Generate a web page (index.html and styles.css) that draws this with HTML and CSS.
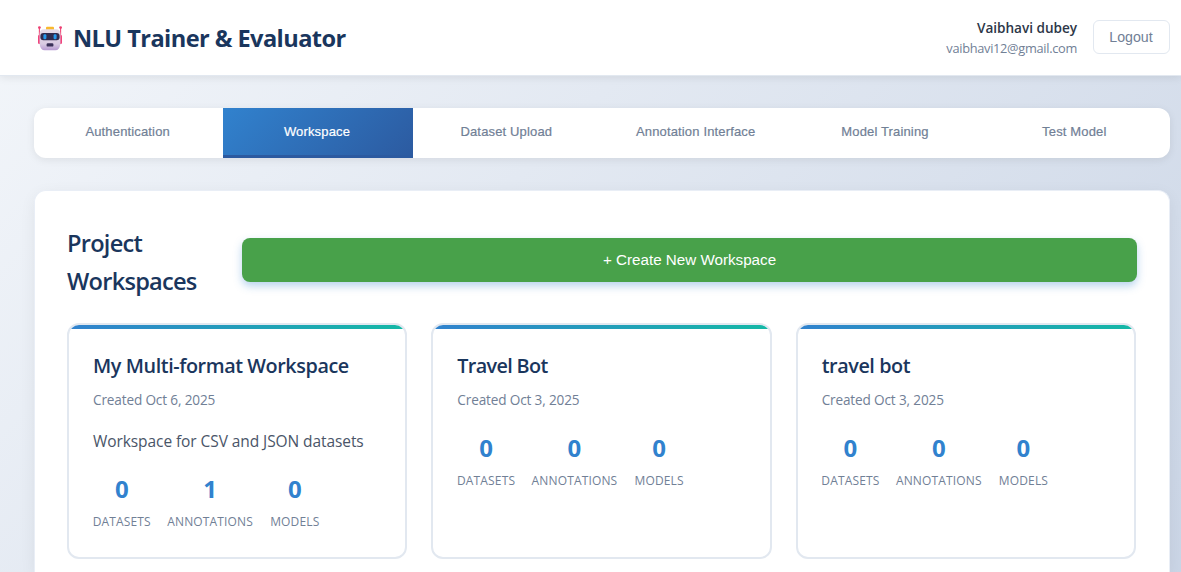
FILE: index.html
```html
<!DOCTYPE html>
<html lang="en">
<head>
<meta charset="utf-8">
<title>NLU Trainer &amp; Evaluator</title>
<link rel="stylesheet" href="styles.css">
</head>
<body>
<header class="topbar">
  <div class="brand">
    <svg class="robot" viewBox="0 0 26 26" aria-hidden="true">
      <defs>
        <linearGradient id="face" x1="0" y1="0" x2="0" y2="1">
          <stop offset="0" stop-color="#e6dcea"/><stop offset="0.7" stop-color="#d9cbe2"/><stop offset="1" stop-color="#b79bd2"/>
        </linearGradient>
      </defs>
      <path d="M2.4 2v12M23.6 2v12" stroke="#ee4b78" stroke-width="1.1"/>
      <circle cx="2.4" cy="2.6" r="1.4" fill="#ee3f72"/><circle cx="23.6" cy="2.6" r="1.4" fill="#ee3f72"/>
      <rect x="1" y="10" width="4" height="9" rx="1.3" fill="#f0447c"/><rect x="21" y="10" width="4" height="9" rx="1.3" fill="#f0447c"/>
      <rect x="9" y="1.7" width="8" height="4" rx="1" fill="#f9b92e"/>
      <path d="M7 4.2h12q4.4 0 4.4 5v10q-1 6-5 6H7.6q-4 0-5-6v-10q0-5 4.400-5z" fill="url(#face)"/>
      <rect x="3.4" y="8" width="19.2" height="7.2" rx="3" fill="#302d50"/>
      <rect x="6.4" y="9.2" width="3" height="5" rx="1.2" fill="#2598ed"/><rect x="16.6" y="9.2" width="3" height="5" rx="1.2" fill="#2598ed"/>
      <rect x="9.6" y="18.2" width="6.8" height="3.4" rx="1.2" fill="#3a3158"/>
    </svg>
    <h1 class="brand-name">NLU Trainer &amp; Evaluator</h1>
  </div>
  <div class="account">
    <div class="user">
      <div class="user-name">Vaibhavi dubey</div>
      <div class="user-mail">vaibhavi12@gmail.com</div>
    </div>
    <button class="logout">Logout</button>
  </div>
</header>
<main class="page">
  <nav class="tabs">
    <button class="tab">Authentication</button>
    <button class="tab active">Workspace</button>
    <button class="tab">Dataset Upload</button>
    <button class="tab">Annotation Interface</button>
    <button class="tab">Model Training</button>
    <button class="tab">Test Model</button>
  </nav>
  <section class="panel">
    <div class="panel-head">
      <h2 class="panel-title">Project Workspaces</h2>
      <button class="create">+ Create New Workspace</button>
    </div>
    <div class="grid">
      <article class="card">
        <h3 class="card-title">My Multi-format Workspace</h3>
        <p class="created">Created Oct 6, 2025</p>
        <p class="desc">Workspace for CSV and JSON datasets</p>
        <div class="stats">
          <div class="stat"><b class="num">0</b><span class="label">DATASETS</span></div>
          <div class="stat"><b class="num">1</b><span class="label">ANNOTATIONS</span></div>
          <div class="stat"><b class="num">0</b><span class="label">MODELS</span></div>
        </div>
      </article>
      <article class="card">
        <h3 class="card-title short">Travel Bot</h3>
        <p class="created">Created Oct 3, 2025</p>
        <div class="stats">
          <div class="stat"><b class="num">0</b><span class="label">DATASETS</span></div>
          <div class="stat"><b class="num">0</b><span class="label">ANNOTATIONS</span></div>
          <div class="stat"><b class="num">0</b><span class="label">MODELS</span></div>
        </div>
      </article>
      <article class="card">
        <h3 class="card-title">travel bot</h3>
        <p class="created">Created Oct 3, 2025</p>
        <div class="stats">
          <div class="stat"><b class="num">0</b><span class="label">DATASETS</span></div>
          <div class="stat"><b class="num">0</b><span class="label">ANNOTATIONS</span></div>
          <div class="stat"><b class="num">0</b><span class="label">MODELS</span></div>
        </div>
      </article>
    </div>
  </section>
</main>
</body>
</html>
```
FILE: styles.css
```css
* { box-sizing: border-box; margin: 0; padding: 0; }
body {
  height: 572px;
  overflow: hidden;
  font-family: "Segoe UI", "Open Sans", "Noto Sans", sans-serif;
  line-height: 1.6;
  color: #2d3748;
  background: linear-gradient(135deg, #f3f6fa 0%, #c3cfe2 100%) 0 0 / 100% 900px no-repeat;
}
button { font-family: "Liberation Sans", Arial, sans-serif; border: 0; background: none; }
.topbar {
  height: 76px;
  padding: 0 11px 0 37px;
  display: flex;
  align-items: center;
  justify-content: space-between;
  background: #fff;
  border-bottom: 1px solid #e2e8f0;
  box-shadow: 0 2px 8px rgba(0, 0, 0, 0.08);
}
.brand { display: flex; align-items: center; gap: 10px; }
.robot { width: 26px; height: 26px; }
.brand-name { padding-top: 2px; font-size: 23.6px; font-weight: 700; color: #1a365d; letter-spacing: -0.57px; white-space: nowrap; }
.account { display: flex; align-items: center; gap: 16px; margin-top: -1px; }
.user { padding-top: 2px; text-align: right; white-space: nowrap; }
.user-name { font-size: 13.6px; line-height: 21px; font-weight: 600; letter-spacing: -0.03px; }
.user-mail { font-size: 12.8px; line-height: 21px; color: #718096; letter-spacing: -0.3px; }
.logout { width: 77px; height: 34px; padding-right: 1px; border: 1px solid #e2e8f0; border-radius: 6px; font-size: 14.2px; color: #718096; }
.page { padding: 32px 11px 0 34px; }
.tabs {
  display: flex;
  height: 50px;
  border-radius: 12px;
  overflow: hidden;
  background: #fff;
  box-shadow: 0 2px 8px rgba(0, 0, 0, 0.08);
}
.tab { flex: 1 1 0; padding: 0 2px 3px 0; font-size: 13px; font-weight: 500; letter-spacing: 0.15px; color: #718096; -webkit-text-stroke: 0.2px currentColor; }
.tab.active {
  color: #fff;
  background: linear-gradient(135deg, #3182ce, #2c5aa0);
  box-shadow: inset 0 -3px 0 #2c5aa0;
}
.panel {
  height: 382px;
  margin-top: 32px;
  padding: 32px 32px 0;
  border: 1px solid #e9eef6;
  border-bottom: 0;
  border-radius: 12px 12px 0 0;
  background: #fff;
  box-shadow: 0 4px 16px rgba(0, 0, 0, 0.06);
}
.panel-head { display: flex; align-items: center; height: 77px; margin-bottom: 23px; }
.panel-title { width: 175px; flex: none; padding: 1px 30px 0 0; font-size: 23.6px; line-height: 38px; font-weight: 600; color: #1a365d; letter-spacing: -0.75px; }
.create {
  flex: 1;
  height: 44px;
  margin-top: -4px;
  border-radius: 8px;
  background: #48a14a;
  color: #fff;
  font-size: 15.2px;
  font-weight: 500;
  box-shadow: 0 4px 8px rgba(49, 130, 206, 0.35);
}
.grid { display: grid; grid-template-columns: repeat(3, 1fr); gap: 24px; margin-right: 1px; }
.card {
  position: relative;
  height: 236px;
  padding: 25px 24px 0;
  border: 2px solid #e2e8f0;
  border-radius: 12px;
  background: #fff;
  overflow: hidden;
}
.card::before {
  content: "";
  position: absolute;
  top: 0;
  left: 0;
  right: 0;
  height: 4px;
  background: linear-gradient(90deg, #3182ce, #14b8a6);
}
.card-title { font-size: 19.8px; line-height: 32px; font-weight: 600; color: #1a365d; letter-spacing: -0.42px; white-space: nowrap; }
.card-title.short { letter-spacing: -0.65px; }
.created { margin: 7px 0 18px; font-size: 13.6px; line-height: 22px; color: #718096; letter-spacing: -0.15px; }
.desc { margin-bottom: 15px; font-size: 15.5px; line-height: 25.6px; color: #4a5568; letter-spacing: -0.08px; white-space: nowrap; }
.stats { display: grid; grid-template-columns: 57.5px 87.3px 50px; gap: 16px; }
.stat { display: flex; flex-direction: column; align-items: center; gap: 4px; }
.num { font-size: 24px; line-height: 38.4px; font-weight: 700; color: #3182ce; }
.label { font-size: 12px; line-height: 19px; color: #718096; letter-spacing: 0.15px; white-space: nowrap; }
```
